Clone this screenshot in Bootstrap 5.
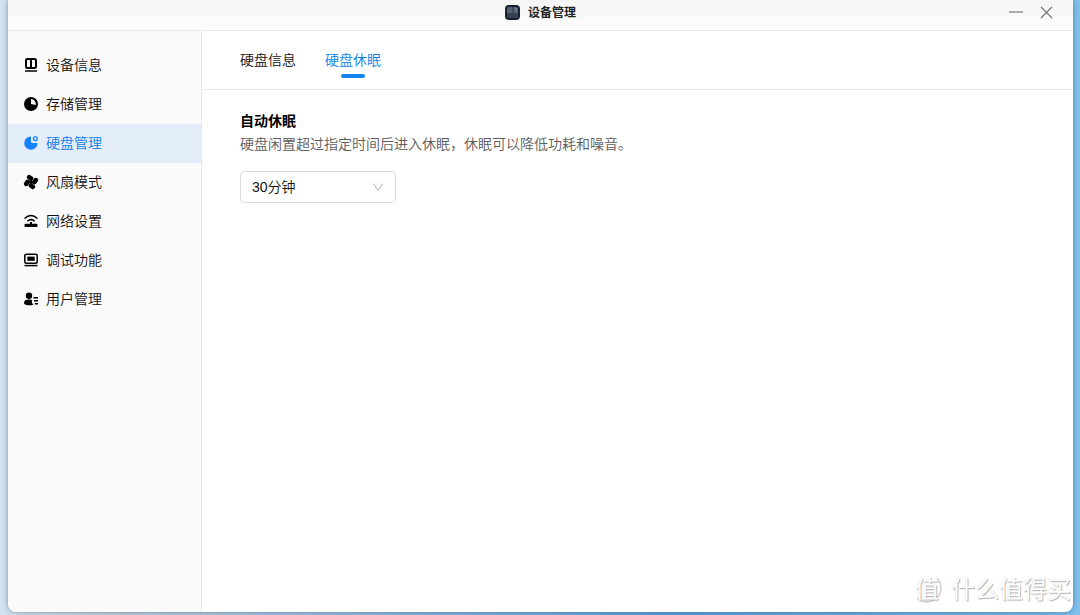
<!DOCTYPE html>
<html lang="zh-CN">
<head>
<meta charset="utf-8">
<meta name="viewport" content="width=device-width, initial-scale=1">
<title>设备管理</title>
<link href="https://cdn.jsdelivr.net/npm/bootstrap@5.3.0/dist/css/bootstrap.min.css" rel="stylesheet">
<style>
  body {
    font-family: "Noto Sans CJK SC", sans-serif;
    font-size: 14px;
    font-weight: 350;
    line-height: 20px;
    color: #111;
    background: linear-gradient(90deg, #d3e3f0 0, #c0cfda 10%, #a9c5df 22%, #7fafd9 45%, #5b9fd6 62%, #74b5e0 92%, #80c0ec 100%);
  }
  .desktop { padding: 0 7px 3px 8px; }
  .app-window {
    background: #fff;
    border-radius: 0 0 8px 8px;
    box-shadow: 0 0 5px rgba(30, 60, 90, .5);
  }
  .titlebar {
    height: 31px;
    padding-bottom: 6px;
    background: linear-gradient(#f5f5f5, #fdfdfd);
    border-bottom: 1px solid #e9e9e9;
    font-size: 12px;
    color: #222;
  }
  .window-controls { gap: 16px; padding: 0 20px 6px 0; }
  .window-controls button { color: #757575; line-height: 0; }
  .sidebar {
    width: 194px;
    padding-top: 15px;
    background: #fafafa;
    border-right: 1px solid #e8e8e8;
    border-bottom-left-radius: 8px;
  }
  .sidebar .nav-link {
    gap: 7px;
    height: 39px;
    padding: 0 16px 3px 15px;
    color: #111;
  }
  .sidebar .nav-link svg { color: #000; margin-top: 2px; }
  .sidebar .nav-link.active { background: #e4eefb; color: #0f7fe6; }
  .sidebar .nav-link.active svg { color: #1684fc; }
  .tabs {
    height: 59px;
    gap: 29px;
    padding: 18px 38px 0;
    border-bottom: 1px solid #ebebeb;
  }
  .tabs .nav-link { padding: 0; color: #111; }
  .tabs .nav-link.active { color: #0f7fe6; }
  .tabs .nav-link.active::after {
    content: "";
    display: block;
    width: 24px;
    height: 4px;
    margin: 5px auto 0;
    border-radius: 2px;
    background: #1684ee;
  }
  .panel { padding: 18px 38px; }
  .panel h1 { font-size: 14px; line-height: 24px; color: #000; }
  .panel p { margin-bottom: 17px; line-height: 22px; color: #5c5c5c; }
  .delay-select {
    width: 156px;
    height: 32px;
    padding: 0 32px 0 11px;
    font-family: "Liberation Sans", "Noto Sans CJK SC", sans-serif;
    font-size: 14px;
    font-weight: 350;
    color: #111;
    border-color: #dcdcdc;
    border-radius: 4px;
    background-image: url("data:image/svg+xml,%3Csvg xmlns='http://www.w3.org/2000/svg' viewBox='0 0 12 12'%3E%3Cpath d='M1.500 2.500l4.500 7 4.500-7' fill='none' stroke='%23b0b0b0'/%3E%3C/svg%3E");
    background-size: 12px 12px;
    background-position: right 11px center;
  }
  .watermark {
    right: 2px;
    bottom: 8px;
    gap: 9px;
    font-size: 24px;
    font-weight: 400;
    line-height: 32px;
    color: #fff;
    text-shadow: 1px 1px 1px #b0b0b0, 0 0 1px #ccc;
    pointer-events: none;
  }
  .watermark-seal {
    width: 30px;
    height: 30px;
    border: 2px solid #d8d8d8;
    border-left-color: transparent;
    border-top-color: transparent;
    border-radius: 50%;
  }
</style>
</head>
<body>
<div class="desktop vh-100">
  <div class="app-window d-flex flex-column h-100 position-relative">
    <header class="titlebar d-flex align-items-center justify-content-center gap-2 fw-bold position-relative flex-shrink-0">
      <svg width="15" height="15" viewBox="0 0 15 15" aria-hidden="true">
        <rect width="15" height="15" rx="4" fill="#17202e"/>
        <rect x="2" y="2" width="11" height="11" rx="2" fill="#566072"/>
        <path d="M2 8h11v3a2 2 0 0 1-2 2H4a2 2 0 0 1-2-2z" fill="#3a4250"/>
        <path d="M8 2v11" stroke="#303848"/>
        <path d="M9 3h3v3z" fill="#758094"/>
      </svg>
      <span>设备管理</span>
      <div class="window-controls position-absolute top-0 end-0 h-100 d-flex align-items-center">
        <button type="button" class="btn p-0 border-0" aria-label="最小化">
          <svg width="15" height="15" viewBox="0 0 15 15"><path d="M0 7h14" stroke="currentColor" stroke-width="1.2"/></svg>
        </button>
        <button type="button" class="btn p-0 border-0" aria-label="关闭">
          <svg width="13" height="13" viewBox="0 0 13 13"><path d="M1 1l11 11M12 1L1 12" stroke="currentColor" stroke-width="1.2"/></svg>
        </button>
      </div>
    </header>
    <div class="d-flex flex-grow-1">
      <nav class="sidebar nav flex-column flex-shrink-0">
        <a href="#" class="nav-link d-flex align-items-center">
          <svg width="16" height="16" viewBox="0 0 16 16" fill="none" stroke="currentColor"><rect x="3" y="2" width="10" height="9" rx="1.5" stroke-width="2"/><path d="M8 2v9" stroke-width="2"/><path d="M2 14h12" stroke-width="1.5"/></svg>
          设备信息</a>
        <a href="#" class="nav-link d-flex align-items-center">
          <svg width="16" height="16" viewBox="0 0 16 16"><circle cx="8" cy="8" r="7" fill="currentColor"/><path d="M8 3A5 5 0 0 1 12.800 9L8 8z" fill="#fafafa"/></svg>
          存储管理</a>
        <a href="#" class="nav-link active d-flex align-items-center" aria-current="page">
          <svg width="16" height="16" viewBox="0 0 16 16"><path d="M8 1.4v5.1A1.5 1.5 0 0 0 9.500 8h5.100A6.700 6.700 0 1 1 8 1.400z" fill="currentColor"/><rect x="10.500" y="1.900" width="3.600" height="3.600" rx="1.200" fill="none" stroke="currentColor" stroke-width="1.400"/></svg>
          硬盘管理</a>
        <a href="#" class="nav-link d-flex align-items-center">
          <svg width="16" height="16" viewBox="0 0 16 16" fill="none" stroke="currentColor" stroke-width="4.600" stroke-linecap="round"><g transform="rotate(8 8 8)"><path d="M5.500 3.500L7.500 4.500M12.500 5.500L11.500 7.500M10.500 12.500L8.500 11.500M3.500 10.500L4.500 8.500"/><path d="M8 4.500v7M4.500 8h7" stroke-width="2"/></g></svg>
          风扇模式</a>
        <a href="#" class="nav-link d-flex align-items-center">
          <svg width="16" height="16" viewBox="0 0 16 16" fill="none" stroke="currentColor" stroke-width="1.500"><path d="M1.500 5.500Q8-.5 14.500 5.500M4.300 8.300Q8 5 11.700 8.300"/><path d="M8 9v2" stroke-width="2"/><rect x="1.500" y="10.800" width="13" height="3.200" rx="1" fill="currentColor" stroke="none"/></svg>
          网络设置</a>
        <a href="#" class="nav-link d-flex align-items-center">
          <svg width="16" height="16" viewBox="0 0 16 16" fill="none" stroke="currentColor" stroke-width="1.500"><rect x="1.800" y="2.200" width="12.400" height="9" rx="1.500"/><rect x="4.300" y="4.600" width="7.400" height="4.200" fill="currentColor" stroke="none"/><path d="M1.500 13.600h13"/></svg>
          调试功能</a>
        <a href="#" class="nav-link d-flex align-items-center">
          <svg width="16" height="16" viewBox="0 0 16 16" fill="currentColor"><circle cx="6" cy="4.800" r="3.200"/><path d="M1 12c0-2.600 1.600-3.600 5-3.600 1.500 0 2.700.3 3.300.8-.8 1-.6 2.500.9 4.500C9 14.500 1 14.800 1 12z"/><path d="M10.500 6.800h4.500M11 9.800h4M11.800 12.800H15" stroke="currentColor" stroke-width="1.400"/></svg>
          用户管理</a>
      </nav>
      <main class="flex-grow-1">
        <nav class="tabs nav">
          <a href="#" class="nav-link">硬盘信息</a>
          <a href="#" class="nav-link active" aria-current="true">硬盘休眠</a>
        </nav>
        <section class="panel">
          <h1 class="fw-bold mb-0" id="sleep-title">自动休眠</h1>
          <p>硬盘闲置超过指定时间后进入休眠，休眠可以降低功耗和噪音。</p>
          <select class="form-select delay-select" aria-labelledby="sleep-title">
            <option selected>30分钟</option>
          </select>
        </section>
      </main>
    </div>
    <div class="watermark position-absolute d-flex align-items-center">
      <span class="watermark-seal d-flex align-items-center justify-content-center">值</span>
      <span>什么值得买</span>
    </div>
  </div>
</div>
<script src="https://cdn.jsdelivr.net/npm/bootstrap@5.3.0/dist/js/bootstrap.bundle.min.js"></script>
</body>
</html>
